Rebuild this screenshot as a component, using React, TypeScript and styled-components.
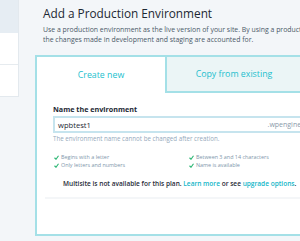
import React from 'react';
import styled, { createGlobalStyle } from 'styled-components';

const GlobalStyle = createGlobalStyle`
  html, body {
    margin: 0;
    padding: 0;
    background: #f3f6f9;
    overflow: hidden;
  }
  body {
    font-family: "Open Sans", "Liberation Sans", sans-serif;
    color: #1f2b38;
  }
`;

const Page = styled.div`
  display: flex;
  width: 300px;
  height: 241px;
  overflow: hidden;
`;

const Sidebar = styled.div`
  width: 19px;
  flex-shrink: 0;
`;

const SideCard = styled.div`
  background: #fff;
  border-right: 1px solid #e3e9ee;
  border-bottom: 1px solid #e3e9ee;
  box-sizing: border-box;
`;

const SideHead = styled.div`
  height: 33px;
  background: #e6edf3;
`;

const SideRow = styled.div`
  height: 31px;
  border-bottom: 1px solid #e6ebef;
  &:last-child {
    border-bottom: none;
  }
`;

const Main = styled.div`
  flex-shrink: 0;
  padding-left: 16px;
  padding-top: 5px;
`;

const Header = styled.div`
  padding-left: 8px;
`;

const Title = styled.h1`
  margin: 0;
  font-size: 11.8px;
  font-weight: 400;
  line-height: 17px;
  color: #1c2833;
`;

const Desc = styled.p`
  margin: 3px 0 0;
  font-size: 6.9px;
  line-height: 9.5px;
  color: #4a5868;
  white-space: nowrap;
`;

const Panel = styled.div`
  margin-top: 11px;
  width: 420px;
  background: #fff;
  border: 2px solid #a4e0e7;
  border-right: none;
  box-sizing: border-box;
`;

const Tabs = styled.div`
  display: flex;
  height: 36px;
`;

const Tab = styled.div<{ $active?: boolean }>`
  width: ${(p) => (p.$active ? '128px' : '136px')};
  display: flex;
  align-items: center;
  justify-content: center;
  font-size: 8.8px;
  color: #1bbfce;
  background: ${(p) => (p.$active ? '#fff' : '#ebf5f6')};
  border-left: ${(p) => (p.$active ? 'none' : '2px solid #a4e0e7')};
  border-bottom: ${(p) => (p.$active ? 'none' : '2px solid #a4e0e7')};
  box-sizing: border-box;
`;

const Body = styled.div`
  padding: 11px 16px 0;
`;

const Label = styled.div`
  font-size: 7.2px;
  font-weight: 700;
  line-height: 10px;
  color: #1c2833;
`;

const InputBox = styled.div`
  margin-top: 2px;
  width: 272px;
  height: 17px;
  display: flex;
  align-items: center;
  border: 2px solid #c6e4ee;
  box-sizing: border-box;
  font-size: 7.6px;
`;

const Field = styled.div`
  flex: 1;
  padding-left: 3px;
  color: #1c2833;
`;

const Suffix = styled.div`
  padding-right: 6px;
  color: #8a9aaa;
  font-size: 7px;
`;

const Help = styled.div`
  margin-top: 1px;
  font-size: 6.2px;
  line-height: 9px;
  color: #95a9bb;
`;

const Checks = styled.div`
  margin-top: 10px;
  display: grid;
  grid-template-columns: 135px 134px;
`;

const CheckItem = styled.div`
  display: flex;
  align-items: center;
  gap: 2px;
  padding-left: 1px;
  font-size: 5.4px;
  line-height: 8px;
  color: #8096ab;
  white-space: nowrap;
`;

const Notice = styled.div`
  margin-top: 10px;
  padding-left: 10px;
  font-size: 6.55px;
  line-height: 10px;
  font-weight: 600;
  color: #1f2b38;
  white-space: nowrap;
`;

const Link = styled.a`
  color: #13b6c8;
  text-decoration: none;
`;

const Divider = styled.div`
  margin: 8px 0 0 -8px;
  height: 2px;
  background: #f4f6f8;
`;

const Footer = styled.div`
  height: 35px;
`;

const Check = () => (
  <svg width="5" height="5" viewBox="0 0 10 10">
    <path d="M1 5.5 L4 8.5 L9 1.5" fill="none" stroke="#2bb673" strokeWidth="2.2" />
  </svg>
);

export default function App() {
  return (
    <>
      <GlobalStyle />
      <Page>
        <Sidebar>
          <SideCard>
            <SideHead />
            <SideRow />
            <SideRow />
          </SideCard>
        </Sidebar>
        <Main>
          <Header>
            <Title>Add a Production Environment</Title>
            <Desc>
              Use a production environment as the live version of your site. By using a production environment, you ensure that
              <br />
              the changes made in development and staging are accounted for.
            </Desc>
          </Header>
          <Panel>
            <Tabs>
              <Tab $active>Create new</Tab>
              <Tab>Copy from existing</Tab>
            </Tabs>
            <Body>
              <Label>Name the environment</Label>
              <InputBox>
                <Field>wpbtest1</Field>
                <Suffix>.wpengine.com</Suffix>
              </InputBox>
              <Help>The environment name cannot be changed after creation.</Help>
              <Checks>
                <CheckItem><Check />Begins with a letter</CheckItem>
                <CheckItem><Check />Between 3 and 14 characters</CheckItem>
                <CheckItem><Check />Only letters and numbers</CheckItem>
                <CheckItem><Check />Name is available</CheckItem>
              </Checks>
              <Notice>
                Multisite is not available for this plan. <Link href="#">Learn more</Link> or see{' '}
                <Link href="#">upgrade options</Link>.
              </Notice>
              <Divider />
            </Body>
            <Footer />
          </Panel>
        </Main>
      </Page>
    </>
  );
}
